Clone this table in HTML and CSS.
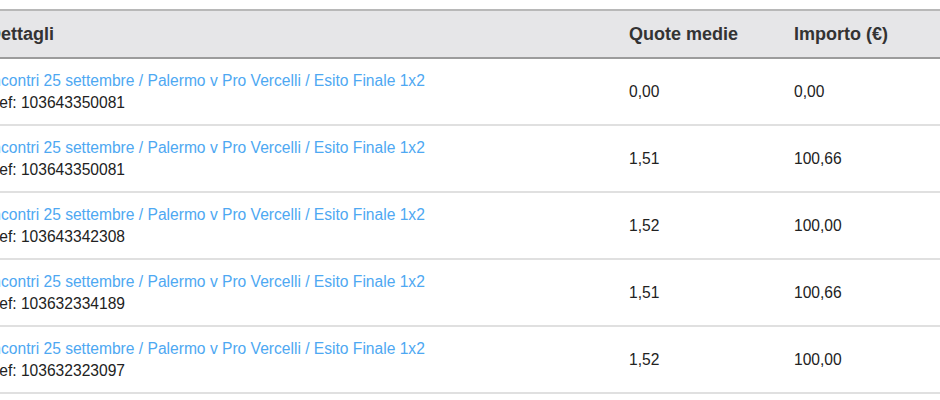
FILE: index.html
```html
<!DOCTYPE html>
<html lang="it">
<head>
<meta charset="utf-8">
<title>Dettagli</title>
<link rel="stylesheet" href="styles.css">
</head>
<body>
<div class="wrap">
<table class="bets">
  <thead>
    <tr>
      <th class="c-det">Dettagli</th>
      <th class="c-q">Quote medie</th>
      <th class="c-imp">Importo (€)</th>
    </tr>
  </thead>
  <tbody>
    <tr>
      <td class="c-det"><a class="ev" href="#">Incontri 25 settembre / Palermo v Pro Vercelli / Esito Finale 1x2</a><div class="ref">Ref: 103643350081</div></td>
      <td>0,00</td>
      <td>0,00</td>
    </tr>
    <tr>
      <td class="c-det"><a class="ev" href="#">Incontri 25 settembre / Palermo v Pro Vercelli / Esito Finale 1x2</a><div class="ref">Ref: 103643350081</div></td>
      <td>1,51</td>
      <td>100,66</td>
    </tr>
    <tr>
      <td class="c-det"><a class="ev" href="#">Incontri 25 settembre / Palermo v Pro Vercelli / Esito Finale 1x2</a><div class="ref">Ref: 103643342308</div></td>
      <td>1,52</td>
      <td>100,00</td>
    </tr>
    <tr>
      <td class="c-det"><a class="ev" href="#">Incontri 25 settembre / Palermo v Pro Vercelli / Esito Finale 1x2</a><div class="ref">Ref: 103632334189</div></td>
      <td>1,51</td>
      <td>100,66</td>
    </tr>
    <tr>
      <td class="c-det"><a class="ev" href="#">Incontri 25 settembre / Palermo v Pro Vercelli / Esito Finale 1x2</a><div class="ref">Ref: 103632323097</div></td>
      <td>1,52</td>
      <td>100,00</td>
    </tr>
  </tbody>
</table>
</div>
</body>
</html>
```
FILE: styles.css
```css
html, body {
  margin: 0;
  padding: 0;
  background: #ffffff;
}
body {
  font-family: "Liberation Sans", Arial, Helvetica, sans-serif;
  color: #222222;
  overflow: hidden;
}
.wrap {
  padding-top: 9px;
  margin-left: -20px;
  width: 1000px;
}
.bets {
  border-collapse: collapse;
  width: 1000px;
  table-layout: fixed;
}
.bets th {
  background: #e6e6e8;
  border-top: 2px solid #b8b8b8;
  border-bottom: 2px solid #9c9c9c;
  height: 46px;
  padding: 0 8px;
  text-align: left;
  font-size: 18px;
  font-weight: bold;
  color: #333333;
}
.c-det { width: 625px; }
.c-q { width: 149px; }
.bets td {
  border-bottom: 2px solid #e0e0e0;
  padding: 11px 8px 10px;
  font-size: 15.6px;
  line-height: 22px;
  vertical-align: middle;
}
.ev {
  color: #4ea8f2;
  text-decoration: none;
  display: block;
}
.ref {
  color: #222222;
}
```
